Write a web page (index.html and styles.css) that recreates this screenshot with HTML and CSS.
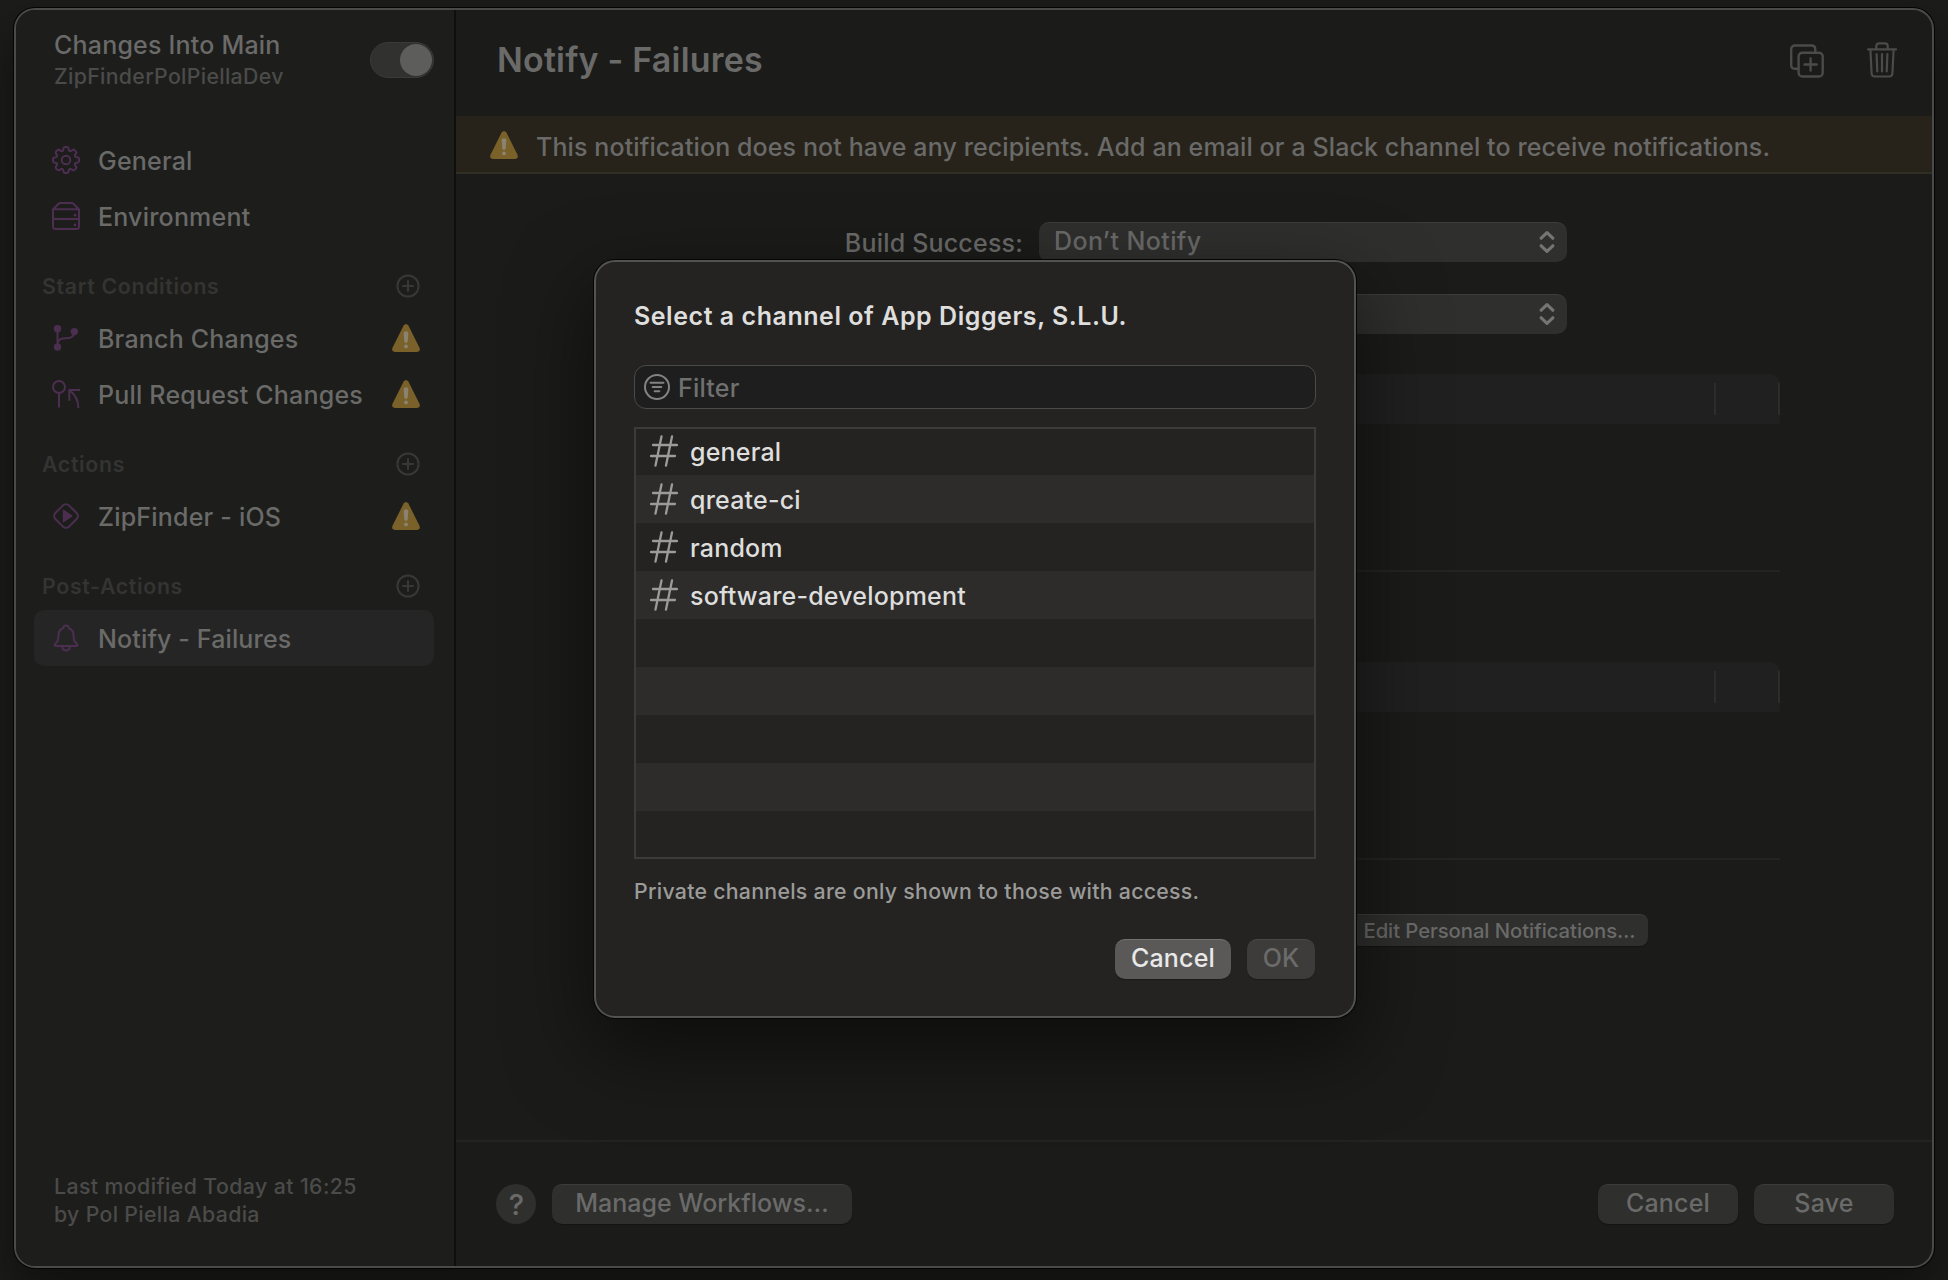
FILE: index.html
```html
<!DOCTYPE html>
<html lang="en">
<head>
<meta charset="utf-8">
<title>Notify - Failures</title>
<link rel="stylesheet" href="styles.css">
</head>
<body>
<svg width="0" height="0" class="defs">
  <defs>
    <path id="tooth" d="M-3.83-9.24C-3.2-9-2.9-9.6-2.7-10.6L-2.5-11.8Q-2.2-13-1-13H1Q2.2-13 2.5-11.8L2.7-10.6C2.9-9.6 3.2-9 3.83-9.24"/>
    <symbol id="warning" viewBox="0 0 28 28">
      <path class="warn-body" d="M11.6 1.6Q14-1.6 16.4 1.6L27.4 23.4Q29 28 24.6 28H3.4Q-1 28 .6 23.4Z"/>
      <path class="warn-mark" d="M14 7.2c1.5 0 2.4 1 2.3 2.4l-.6 7.6c-.1 1-.8 1.7-1.7 1.7s-1.6-.7-1.7-1.7l-.6-7.6C11.600 8.200 12.500 7.200 14 7.200Z"/>
      <circle class="warn-mark" cx="14" cy="22.400" r="1.900"/>
    </symbol>
    <symbol id="plus" viewBox="0 0 24 24"><circle cx="12" cy="12" r="10.600"/><path d="M12 7v10M7 12h10"/></symbol>
    <symbol id="hash" viewBox="0 0 28 32"><path d="M11.500 1.500 5.500 30.500M22 1.500 16 30.500M3 10H27M1 21H25"/></symbol>
    <symbol id="updown" viewBox="0 0 16 24"><path d="M2.200 8.200 8 2.600l5.800 5.600M2.200 15.800 8 21.400l5.800-5.600"/></symbol>
  </defs>
</svg>

<div class="window">
  <aside class="sidebar">
    <header class="workflow">
      <div class="workflow-names">
        <div class="workflow-title">Changes Into Main</div>
        <div class="workflow-product">ZipFinderPolPiellaDev</div>
      </div>
      <div class="toggle"><div class="knob"></div></div>
    </header>

    <nav class="nav">
      <div class="item">
        <svg class="icon" viewBox="-14 -14 28 28"><use href="#tooth"/><use href="#tooth" transform="rotate(45)"/><use href="#tooth" transform="rotate(90)"/><use href="#tooth" transform="rotate(135)"/><use href="#tooth" transform="rotate(180)"/><use href="#tooth" transform="rotate(225)"/><use href="#tooth" transform="rotate(270)"/><use href="#tooth" transform="rotate(315)"/><circle r="4.300"/></svg>
        <span class="label">General</span>
      </div>
      <div class="item">
        <svg class="icon" viewBox="0 0 28 28"><path d="M1 7.500 6.500 1.800Q7.300 1 8.500 1h11q1.200 0 2 .8L27 7.500V24.500Q27 27 24.500 27h-21Q1 27 1 24.500ZM1 7.200H27M1 17H27"/><circle class="dot" cx="23" cy="13.200" r="1.400"/><circle class="dot" cx="23" cy="23" r="1.400"/></svg>
        <span class="label">Environment</span>
      </div>

      <div class="group">Start Conditions<svg class="add"><use href="#plus"/></svg></div>
      <div class="item">
        <svg class="icon" viewBox="0 0 28 28"><path d="M5.500 5V23M22.300 8C22.300 13 18.500 14.300 14 14.300 9 14.300 6 15 5.500 20"/><circle class="dot" cx="5.500" cy="4.800" r="3.700"/><circle class="dot" cx="5.500" cy="23" r="3.700"/><circle class="dot" cx="22.300" cy="7.600" r="3.700"/></svg>
        <span class="label">Branch Changes</span>
        <svg class="warning"><use href="#warning"/></svg>
      </div>
      <div class="item">
        <svg class="icon" viewBox="0 0 28 28"><circle cx="7" cy="7" r="6"/><path d="M7 13V26.800M27.500 10H17.300V20M17.600 10.300C23 14.500 26.300 20 26.300 27.500"/></svg>
        <span class="label">Pull Request Changes</span>
        <svg class="warning"><use href="#warning"/></svg>
      </div>

      <div class="group">Actions<svg class="add"><use href="#plus"/></svg></div>
      <div class="item">
        <svg class="icon" viewBox="0 0 28 28"><rect x="4.400" y="4.400" width="19.200" height="19.200" rx="4.200" transform="rotate(45 14 14)"/><path class="dot" d="M10.800 8.300V19.700Q10.900 20.700 11.800 20.200L20 14.800Q20.900 14 20 13.200L11.800 7.800Q10.900 7.300 10.800 8.300Z"/></svg>
        <span class="label">ZipFinder - iOS</span>
        <svg class="warning"><use href="#warning"/></svg>
      </div>

      <div class="group">Post-Actions<svg class="add"><use href="#plus"/></svg></div>
      <div class="item selected">
        <svg class="icon" viewBox="0 0 28 28"><path d="M3.600 22H24.400Q25.700 22 25.200 20.700L22.400 16.800Q21.800 15.500 21.700 13.500 21.800 5.500 17 4.200 16.500 1.600 14 1.600 11.500 1.600 11 4.200 6.200 5.500 6.300 13.500 6.200 15.500 5.600 16.800L2.800 20.700Q2.300 22 3.600 22ZM10 22.200Q10.500 26.600 14 26.600 17.500 26.600 18 22.200"/></svg>
        <span class="label tight">Notify - Failures</span>
      </div>
    </nav>

    <footer class="modified">Last modified Today at 16:25<br><span class="author">by Pol Piella Abadia</span></footer>
  </aside>

  <main class="main">
    <header class="head">
      <h1 class="title">Notify - Failures</h1>
      <div class="tools">
        <svg class="tool-copy" viewBox="0 0 34 34"><path d="M8.300 24.700H5Q1.200 24.700 1.200 21V5.500Q1.200 1.500 5 1.500H21.500Q25.300 1.500 25.300 5.500V8.600"/><rect x="8.600" y="8.800" width="24.100" height="23.700" rx="3.800"/><path d="M20.600 14.500V26.500M14.500 20.500H26.700"/></svg>
        <svg class="tool-trash" viewBox="0 0 30 36"><path d="M1 7.300H29M9.300 7V4Q9.300 1.300 12 1.300H18Q20.700 1.300 20.700 4V7M3.400 7.500 4.600 31.500Q4.800 34.500 7.800 34.500H22.200Q25.200 34.500 25.400 31.500L26.600 7.500M9.600 12 10.300 29.500M15 12V29.500M20.400 12 19.700 29.500"/></svg>
      </div>
    </header>

    <div class="banner">
      <svg class="warning"><use href="#warning"/></svg>
      <span class="banner-text">This notification does not have any recipients. Add an email or a Slack channel to receive notifications.</span>
    </div>

    <section class="form">
      <div class="field">
        <span class="field-label">Build Success:</span>
        <div class="popup"><span class="popup-value">Don’t Notify</span><svg class="updown"><use href="#updown"/></svg></div>
      </div>
      <div class="field">
        <span class="field-label"></span>
        <div class="popup"><span class="popup-value"></span><svg class="updown"><use href="#updown"/></svg></div>
      </div>
      <div class="table"><div class="table-head"><i class="col"></i><i class="col last"></i></div></div>
      <div class="table"><div class="table-head"><i class="col"></i><i class="col last"></i></div></div>
      <div class="personal"><div class="button small">Edit Personal Notifications…</div></div>
    </section>

    <footer class="actions">
      <div class="help">?</div>
      <div class="button manage">Manage Workflows…</div>
      <div class="button wide push">Cancel</div>
      <div class="button wide">Save</div>
    </footer>
  </main>

</div>

<div class="sheet">
  <h2 class="sheet-title">Select a channel of App Diggers, S.L.U.</h2>
  <div class="filter">
    <svg class="filter-icon" viewBox="0 0 26 26"><circle cx="13" cy="13" r="12"/><path d="M6.500 8.800H19.500M8.700 13H17.300M10.700 17.200H15.300"/></svg>
    <span class="filter-text">Filter</span>
  </div>
  <div class="channels">
    <div class="channel"><svg class="hash"><use href="#hash"/></svg><span class="name">general</span></div>
    <div class="channel"><svg class="hash"><use href="#hash"/></svg><span class="name">qreate-ci</span></div>
    <div class="channel"><svg class="hash"><use href="#hash"/></svg><span class="name">random</span></div>
    <div class="channel"><svg class="hash"><use href="#hash"/></svg><span class="name">software-development</span></div>
    <div class="channel"></div>
    <div class="channel"></div>
    <div class="channel"></div>
    <div class="channel"></div>
    <div class="channel"></div>
  </div>
  <p class="note">Private channels are only shown to those with access.</p>
  <div class="sheet-actions">
    <div class="button sheet-cancel">Cancel</div>
    <div class="button sheet-ok">OK</div>
  </div>
</div>
</body>
</html>
```
FILE: styles.css
```css
* { box-sizing: border-box; }

body {
  margin: 0;
  width: 1948px;
  height: 1280px;
  padding: 8px 14px 12px;
  overflow: hidden;
  position: relative;
  background: #1c1c1a;
  color: #6a6a69;
  font: 450 25px/32px Inter, "Liberation Sans", sans-serif;
  letter-spacing: 0.2px;
  white-space: nowrap;
}

svg {
  display: block;
  flex: none;
  fill: none;
  stroke-width: 2;
  stroke-linecap: round;
  stroke-linejoin: round;
}

.defs { position: absolute; }

.window {
  display: flex;
  width: 1920px;
  height: 1260px;
  border: 2px solid #4a4a49;
  border-radius: 21px;
  overflow: hidden;
  background: #1b1b19;
  box-shadow: 0 0 0 1px #040404, 0 26px 50px 4px rgba(0, 0, 0, 0.42);
}

/* Sidebar */
.sidebar {
  display: flex;
  flex-direction: column;
  flex: none;
  width: 440px;
  border-right: 2px solid #0f0f0e;
  background: #1d1d1b;
}

.workflow {
  display: flex;
  justify-content: space-between;
  height: 122px;
  padding: 19px 20px 0 38px;
}

.workflow-product {
  font-size: 21.3px;
  line-height: 31px;
  letter-spacing: 0.32px;
  color: #4b4b4a;
}

.toggle {
  display: flex;
  justify-content: flex-end;
  width: 64px;
  height: 36px;
  margin-top: 13px;
  padding: 1px;
  border: 1px solid #3a3a39;
  border-radius: 18px;
  background: #313130;
}

.knob {
  width: 32px;
  height: 32px;
  border-radius: 50%;
  background: #5d5d5c;
}

.nav { flex: 1; }

.item {
  display: flex;
  align-items: center;
  height: 56px;
  margin: 0 20px 0 18px;
  padding: 0 14px 0 18px;
  border-radius: 10px;
}

.item.selected { background: #252525; }

.icon {
  width: 28px;
  height: 28px;
  stroke: #4c2e51;
}

.dot { fill: #4c2e51; stroke: none; }

.label {
  flex: 1;
  margin-left: 18px;
  padding-top: 2px;
}

.tight { letter-spacing: 0.14px; }

.warning { width: 28px; height: 28px; }
.warn-body { fill: #7a612a; }
.warn-mark { fill: #8a8371; }

.group {
  display: flex;
  align-items: center;
  justify-content: space-between;
  height: 66px;
  padding: 18px 34px 0 26px;
  font-size: 21.3px;
  font-weight: 600;
  letter-spacing: 0.67px;
  color: #343433;
}

.add { width: 24px; height: 24px; stroke: #383837; }

.modified {
  padding: 0 0 38px 38px;
  font-size: 21.3px;
  line-height: 28px;
  letter-spacing: 0.4px;
  color: #4b4b4a;
}

.author { letter-spacing: 0.32px; }

/* Detail pane */
.main {
  display: flex;
  flex-direction: column;
  flex: 1;
}

.head {
  display: flex;
  align-items: center;
  justify-content: space-between;
  height: 106px;
  padding: 0 35px 6px 41px;
}

.title {
  margin: 0;
  font-size: 34px;
  font-weight: 600;
  line-height: 42px;
  letter-spacing: 0.19px;
}

.tools {
  display: flex;
  align-items: flex-end;
  gap: 43px;
  stroke: #4b4b4a;
}

.tool-copy { width: 34px; height: 34px; stroke-width: 2.4; }
.tool-trash { width: 30px; height: 36px; stroke-width: 2.2; }

.banner {
  display: flex;
  align-items: center;
  height: 58px;
  padding-left: 34px;
  border-bottom: 2px solid #312e24;
  background: #27231b;
}

.banner-text {
  margin-left: 18px;
  padding-top: 5px;
  letter-spacing: 0.11px;
}

.banner .warning { margin-top: 2px; }

.form {
  flex: 1;
  padding: 48px 152px 0;
}

.field {
  display: grid;
  grid-template-columns: 415px 528px;
  gap: 16px;
  height: 40px;
  margin-bottom: 32px;
}

.field-label { padding-top: 5px; text-align: right; }

.popup {
  display: flex;
  align-items: center;
  justify-content: space-between;
  padding: 0 12px 0 15px;
  border-top: 1px solid #3c3c3b;
  border-radius: 10px;
  background: #2f2f2e;
}

.popup-value { padding-bottom: 3px; letter-spacing: 0.4px; }

.updown {
  width: 16px;
  height: 24px;
  margin-bottom: 2px;
  stroke: #747473;
  stroke-width: 3.2;
}

.table {
  height: 198px;
  margin: 0 0 90px;
  border-bottom: 2px solid #242423;
}

.field + .table { margin-top: 40px; }

.table-head {
  display: flex;
  align-items: center;
  justify-content: flex-end;
  gap: 62px;
  height: 50px;
  border-radius: 10px 10px 0 0;
  background: #202020;
}

.col { width: 2px; height: 32px; background: #2c2c2c; }

.personal { display: flex; margin: -36px 0 0 742px; }

.button {
  display: flex;
  justify-content: center;
  height: 40px;
  padding-top: 2px;
  border-top: 1px solid #3c3c3b;
  border-radius: 10px;
  background: #2f2f2e;
  box-shadow: 0 1px 1px rgba(0, 0, 0, 0.25);
}

.small {
  width: 298px;
  height: 32px;
  padding: 0 0 0 1px;
  border-radius: 8px;
  font-size: 20.3px;
  font-weight: 500;
  line-height: 31px;
  letter-spacing: -0.07px;
}

.actions {
  display: flex;
  align-items: center;
  height: 126px;
  padding: 0 38px 0 40px;
  border-top: 2px solid #232322;
}

.help {
  width: 40px;
  height: 40px;
  padding-left: 1px;
  border-radius: 50%;
  background: #2f2f2e;
  font-size: 29px;
  line-height: 41px;
  text-align: center;
}

.manage { width: 300px; margin-left: 16px; letter-spacing: 0; }
.wide { width: 140px; }
.push { margin: 0 16px 0 auto; }

/* Channel sheet, floating over the window */
.sheet {
  position: absolute;
  left: 594px;
  top: 260px;
  width: 762px;
  height: 758px;
  padding: 38px 38px 0;
  border: 2px solid #525251;
  border-radius: 21px;
  background: #242321;
  box-shadow: 0 0 0 1px #050505, 0 30px 80px 4px rgba(0, 0, 0, 0.5);
  color: #dededd;
}

.sheet-title {
  margin: 0;
  font-size: 25px;
  font-weight: 600;
  line-height: 32px;
  letter-spacing: 0.54px;
}

.filter {
  display: flex;
  align-items: center;
  gap: 8px;
  height: 44px;
  margin-top: 33px;
  padding: 0 9px;
  border: 1px solid #4a4a49;
  border-radius: 12px;
  background: #1e1e1e;
  color: #70706f;
}

.filter-icon { width: 26px; height: 26px; stroke: #838382; }

.filter-text { padding-top: 2px; }

.channels {
  margin-top: 18px;
  outline: 2px solid #3b3b3a;
  outline-offset: -2px;
}

.channel {
  display: flex;
  align-items: center;
  gap: 12px;
  height: 48px;
  padding-left: 16px;
}

.channel:nth-child(even) { background: #2d2c2b; }

.hash { width: 28px; height: 32px; stroke: #9b9b99; stroke-width: 2.3; }

.name { padding-top: 1px; }

.note {
  margin: 16px 0 0;
  font-size: 21.3px;
  font-weight: 500;
  letter-spacing: 0.28px;
  color: #9b9b9a;
}

.sheet-actions {
  display: flex;
  justify-content: flex-end;
  gap: 16px;
  margin: 32px 1px 0 0;
}

.sheet-cancel {
  width: 116px;
  border-color: #737271;
  background: #5a5958;
  color: #e9e9e9;
}

.sheet-ok {
  width: 68px;
  border-color: #484746;
  background: #3d3c3b;
  color: #6b6b69;
  letter-spacing: 0;
}
```
